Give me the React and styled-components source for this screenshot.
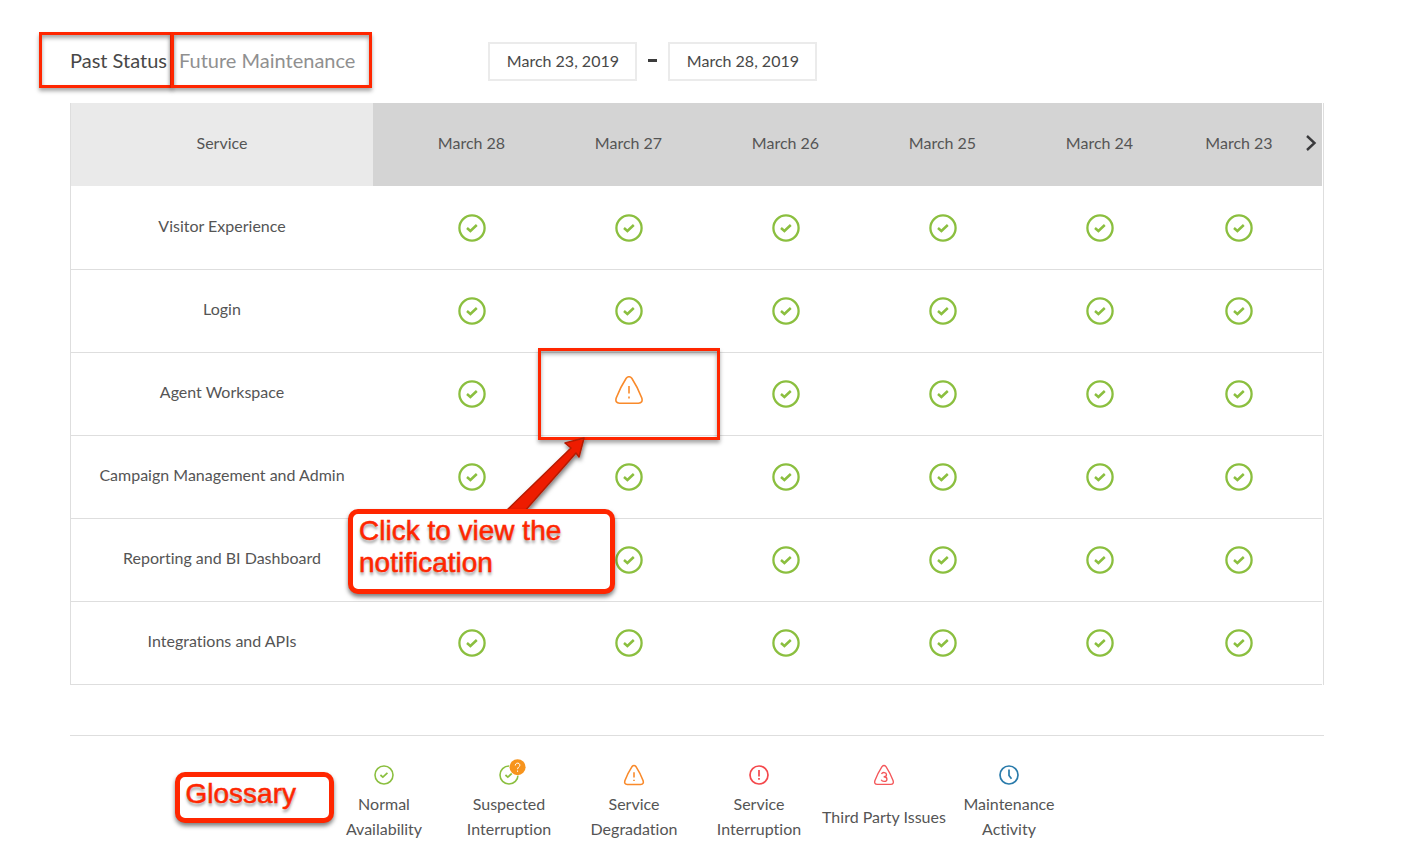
import React from "react";
import styled, { createGlobalStyle, css } from "styled-components";

const GlobalStyle = createGlobalStyle`
  * { box-sizing: border-box; }
  body { margin: 0; background: #fff; color: #555; font-variant-ligatures: none; }
  body, button, input { font-family: Lato, "Open Sans", sans-serif; font-size: 16px; line-height: 24px; }
`;

const RED = "#ff2600";
const GREEN = "#8bbf3f";
const ORANGE = "#f98a2b";

const boxShadow = css`
  box-shadow: 0 3px 4px rgba(0, 0, 0, 0.5);
`;

const outline = css`
  border: 3px solid ${RED};
  box-shadow: 0 3px 4px rgba(0, 0, 0, 0.35), inset 0 3px 4px rgba(0, 0, 0, 0.35);
`;

const Page = styled.main`
  padding: 32px 100px 20px 70px;
`;

const Toolbar = styled.header`
  display: flex;
  align-items: center;
  margin-left: -31px;
`;

const Tabs = styled.nav`
  display: flex;
  margin-right: 116px;
`;

const Tab = styled.button`
  ${outline}
  height: 56px;
  padding: ${(p) => (p.$active ? "0 3px 1px 28px" : "0 14px 1px 5px")};
  background: none;
  color: ${(p) => (p.$active ? "#484848" : "#909090")};
  font-size: 20px;
  font-variant-ligatures: none;
  white-space: nowrap;
  cursor: pointer;
  & + & { margin-left: -2px; }
`;

const DateRange = styled.div`
  display: flex;
  align-items: center;
`;

const DateInput = styled.input`
  width: 149px;
  height: 39px;
  margin-top: 2px;
  padding: 0 0 1px;
  border: 2px solid #ebebeb;
  background: #fff;
  color: #484848;
  text-align: center;
`;

const Dash = styled.span`
  width: 9px;
  height: 3px;
  margin: 0 11px;
  background: #3c3c3c;
`;

const TableFrame = styled.section`
  margin-top: 15px;
  padding-right: 1px;
  border: solid #dedede;
  border-width: 0 1px;
`;

const StatusTable = styled.table`
  width: 100%;
  table-layout: fixed;
  border-collapse: separate;
  border-spacing: 0;
`;

const Col = styled.col`
  width: ${(p) => p.$w}px;
`;

const HeadCell = styled.th`
  height: 84px;
  padding: 0 0 3px ${(p) => (p.$first ? 20 : 0)}px;
  border-bottom: 1px solid transparent;
  background: ${(p) => (p.$service ? "#eaeaea" : "#d4d4d4")};
  background-clip: padding-box;
  font-weight: 400;
  text-align: center;
`;

const HeadWithNext = styled.div`
  display: grid;
  grid-template-columns: 1fr 22px;
  align-items: center;
`;

const NextButton = styled.button`
  display: flex;
  width: 22px;
  height: 24px;
  padding: 0;
  border: 0;
  background: none;
  align-items: center;
  justify-content: center;
  cursor: pointer;
`;

const ServiceCell = styled.th`
  height: 83px;
  padding: 0 0 4px;
  border-bottom: 1px solid #dedede;
  font-weight: 400;
  text-align: center;
`;

const StatusCell = styled.td`
  position: relative;
  height: 83px;
  padding: 0 ${(p) => (p.$last ? 22 : 0)}px 0 ${(p) => (p.$first ? 20 : 0)}px;
  border-bottom: 1px solid #dedede;
  svg { display: block; margin: 0 auto; }
`;

const AlertButton = styled.button`
  display: block;
  margin: 0 auto;
  padding: 0 0 8px;
  border: 0;
  background: none;
  cursor: pointer;
`;

const CellOutline = styled.span`
  ${outline}
  position: absolute;
  inset: -5px -13px -5px -12px;
  z-index: 1;
  pointer-events: none;
`;

const ArrowSlot = styled.span`
  position: absolute;
  left: -50px;
  top: 79px;
  z-index: 2;
  pointer-events: none;
`;

const calloutText = css`
  ${boxShadow}
  position: absolute;
  border: 5px solid ${RED};
  border-radius: 10px;
  background: #fff;
  color: ${RED};
  font-family: "Liberation Sans", Arial, sans-serif;
  font-size: 28px;
  line-height: 32px;
  -webkit-text-stroke: 0.5px ${RED};
  text-shadow: 0 3px 3px rgba(0, 0, 0, 0.4);
`;

const Callout = styled.div`
  ${calloutText}
  left: -202px;
  top: 156px;
  z-index: 3;
  width: 267px;
  height: 85px;
  padding: 1px 6px;
`;

const Glossary = styled.section`
  display: flex;
  justify-content: center;
  margin-top: 50px;
  padding: 29px 1px 0 0;
  border-top: 1px solid #dedede;
`;

const GlossaryBody = styled.div`
  position: relative;
`;

const GlossaryTitle = styled.h2`
  ${calloutText}
  right: calc(100% - 12px);
  top: 7px;
  width: 159px;
  height: 51px;
  margin: 0;
  padding: 1px 6px;
  font-weight: 400;
`;

const GlossaryList = styled.ul`
  display: flex;
  margin: 0;
  padding: 0;
  list-style: none;
`;

const GlossaryItem = styled.li`
  display: flex;
  flex-direction: column;
  align-items: center;
  width: 125px;
  line-height: 25px;
  text-align: center;
  svg { flex: none; overflow: visible; }
`;

const GlossaryLabel = styled.span`
  display: flex;
  align-items: center;
  height: 50px;
  margin-top: 6px;
  white-space: pre-line;
`;

const CheckIcon = ({ size = 28, stroke = 2.3, badge }) => (
  <svg width={size} height={size} viewBox="0 0 28 28" fill="none" stroke={GREEN} role="img" aria-label="Normal">
    <circle cx="14" cy="14" r="12.6" strokeWidth={stroke} />
    <path d="M9 14l3.400 3 6.400-6" strokeWidth={stroke + 0.2} />
    {badge && (
      <g>
        <circle cx="26" cy="3" r="12" fill="#fff" stroke="none" />
        <circle cx="26" cy="3" r="11.2" fill="#f7941d" stroke="none" />
        <path d="M22.8 .7c0-4.400 6.400-4.400 6.400-.4 0 2.600-3.200 2.400-3.200 5.600M26 7.700v1.900" stroke="#fff" strokeWidth="1.4" />
      </g>
    )}
  </svg>
);

const TriangleIcon = ({ size = 28, color = ORANGE, stroke = 2, children }) => (
  <svg width={size} height={size} viewBox="0 0 28 28" fill="none" stroke={color} strokeWidth={stroke} role="img" aria-label="Warning">
    <path d="M11.200 2.300Q14-.8 16.800 2.300Q22.500 11 26.800 22Q28.200 27 23.400 27.200H4.600Q-.2 27 1.200 22Q5.500 11 11.200 2.300Z" />
    {children || <path d="M14 10v7.500M14 20.500v2" />}
  </svg>
);

const ErrorIcon = () => (
  <svg width="20" height="20" viewBox="0 0 20 20" fill="none" stroke="#f4484c" strokeWidth="1.700" role="img" aria-label="Interruption">
    <circle cx="10" cy="10" r="9" />
    <path d="M10 5v6.500M10 13v1.800" />
  </svg>
);

const ClockIcon = () => (
  <svg width="20" height="20" viewBox="0 0 20 20" fill="none" stroke="#2a7bab" strokeWidth="1.700" role="img" aria-label="Maintenance">
    <circle cx="10" cy="10" r="9" />
    <path d="M10 4.500v6l2.500 3.200" />
  </svg>
);

const Arrow = () => (
  <svg width="100" height="90" viewBox="500 432 100 90" aria-hidden="true">
    <defs>
      <filter id="drop" x="-20%" y="-20%" width="150%" height="150%">
        <feDropShadow dx="1" dy="3" stdDeviation="2" floodOpacity="0.5" />
      </filter>
    </defs>
    <path
      d="M584 438L565 443L571 448L504 513L516 521L576 453L579 457Z"
      fill="#ee1f00" stroke="#b51a04" strokeWidth="1.500" strokeLinejoin="round" filter="url(#drop)"
    />
  </svg>
);

const DAYS = ["March 28", "March 27", "March 26", "March 25", "March 24", "March 23"];
const WIDTHS = [302, 177, 157, 157, 157, 157, 144];
const SERVICES = [
  { name: "Visitor Experience" },
  { name: "Login" },
  { name: "Agent Workspace", degraded: "March 27" },
  { name: "Campaign Management and Admin" },
  { name: "Reporting and BI Dashboard" },
  { name: "Integrations and APIs" },
];

const GLOSSARY = [
  { label: "Normal\nAvailability", icon: <CheckIcon size={20} stroke={2.2} /> },
  { label: "Suspected\nInterruption", icon: <CheckIcon size={20} stroke={2.2} badge /> },
  { label: "Service\nDegradation", icon: <TriangleIcon size={20} stroke={2.2} /> },
  { label: "Service\nInterruption", icon: <ErrorIcon /> },
  {
    label: "Third Party Issues",
    icon: (
      <TriangleIcon size={20} color="#f4575a" stroke={1.9}>
        <path d="M10.500 12.500c1.500-3 7-2.400 7 1 0 2.200-2 3-4 3 2.500 0 4.600 1 4.600 3.300 0 4-6.600 4.200-8 .8" />
      </TriangleIcon>
    ),
  },
  { label: "Maintenance\nActivity", icon: <ClockIcon /> },
];

export default function App() {
  return (
    <Page>
      <GlobalStyle />
      <Toolbar>
        <Tabs>
          <Tab type="button" $active>Past Status</Tab>
          <Tab type="button">Future Maintenance</Tab>
        </Tabs>
        <DateRange>
          <DateInput aria-label="From" defaultValue="March 23, 2019" />
          <Dash />
          <DateInput aria-label="To" defaultValue="March 28, 2019" />
        </DateRange>
      </Toolbar>

      <TableFrame>
        <StatusTable>
          <colgroup>
            {WIDTHS.map((w, i) => <Col key={i} $w={w} />)}
          </colgroup>
          <thead>
            <tr>
              <HeadCell scope="col" $service>Service</HeadCell>
              {DAYS.map((day, i) => (
                <HeadCell key={day} scope="col" $first={i === 0}>
                  {i < DAYS.length - 1 ? day : (
                    <HeadWithNext>
                      {day}
                      <NextButton type="button" aria-label="Next dates">
                        <svg width="12" height="18" viewBox="0 0 12 18" fill="none" stroke="#3a3a3c" strokeWidth="2.400">
                          <path d="M2 2l7.500 7L2 16" />
                        </svg>
                      </NextButton>
                    </HeadWithNext>
                  )}
                </HeadCell>
              ))}
            </tr>
          </thead>
          <tbody>
            {SERVICES.map(({ name, degraded }) => (
              <tr key={name}>
                <ServiceCell scope="row">{name}</ServiceCell>
                {DAYS.map((day, i) => (
                  <StatusCell key={day} $first={i === 0} $last={i === DAYS.length - 1}>
                    {degraded === day ? (
                      <>
                        <AlertButton type="button" aria-label="View notification"><TriangleIcon stroke={1.6} /></AlertButton>
                        <CellOutline />
                        <ArrowSlot><Arrow /></ArrowSlot>
                        <Callout>Click to view the notification</Callout>
                      </>
                    ) : <CheckIcon />}
                  </StatusCell>
                ))}
              </tr>
            ))}
          </tbody>
        </StatusTable>
      </TableFrame>

      <Glossary>
        <GlossaryBody>
          <GlossaryTitle>Glossary</GlossaryTitle>
          <GlossaryList>
            {GLOSSARY.map(({ label, icon }) => (
              <GlossaryItem key={label}>
                {icon}
                <GlossaryLabel>{label}</GlossaryLabel>
              </GlossaryItem>
            ))}
          </GlossaryList>
        </GlossaryBody>
      </Glossary>
    </Page>
  );
}
